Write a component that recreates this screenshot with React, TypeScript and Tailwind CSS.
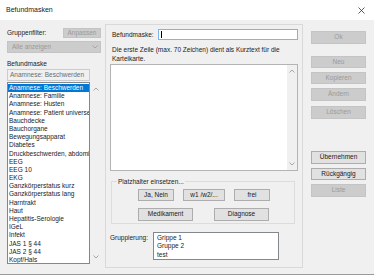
import React from 'react'

const items = [
  'Anamnese: Beschwerden',
  'Anamnese: Familie',
  'Anamnese: Husten',
  'Anamnese: Patient universell',
  'Bauchdecke',
  'Bauchorgane',
  'Bewegungsapparat',
  'Diabetes',
  'Druckbeschwerden, abdominal',
  'EEG',
  'EEG 10',
  'EKG',
  'Ganzkörperstatus kurz',
  'Ganzkörperstatus lang',
  'Harntrakt',
  'Haut',
  'Hepatitis-Serologie',
  'IGeL',
  'Infekt',
  'JAS 1 § 44',
  'JAS 2 § 44',
  'Kopf/Hals',
]

const Arrow = ({ down = false }: { down?: boolean }) => (
  <svg width="6" height="4" viewBox="0 0 6 4" className="block">
    <polyline
      points={down ? '0.5,0.5 3,3 5.5,0.5' : '0.5,3.5 3,1 5.5,3.5'}
      fill="none"
      stroke="#a6a6a6"
      strokeWidth="1"
    />
  </svg>
)

const Btn = ({
  label,
  w,
  h = 'h-[12px]',
  disabled = false,
}: {
  label: string
  w: string
  h?: string
  disabled?: boolean
}) => (
  <div
    className={`${w} ${h} flex items-center justify-center border text-[6.5px] leading-none ${
      disabled
        ? 'border-[#c4c4c4] bg-[#cccccc] text-[#9a9a9a]'
        : 'border-[#adadad] bg-[#e1e1e1] text-[#1a1a1a]'
    }`}
  >
    {label}
  </div>
)

const App = () => {
  return (
    <div
      className="flex h-[275px] w-[374px] flex-col overflow-hidden bg-[#f0f0f0] text-[6.5px] text-[#1a1a1a]"
      style={{ fontFamily: '"Liberation Sans", Arial, sans-serif' }}
    >
      {/* title bar */}
      <div className="flex h-[20px] shrink-0 items-center justify-between bg-white pl-[6px] pr-[9px]">
        <span className="text-[7px]">Befundmasken</span>
        <svg width="7" height="7" viewBox="0 0 7 7">
          <path d="M0.5 0.5 L6.5 6.5 M6.5 0.5 L0.5 6.5" stroke="#333" strokeWidth="0.8" />
        </svg>
      </div>

      <div className="flex flex-1 border-b border-[#9a9a9a]">
        {/* left column */}
        <div className="ml-[7px] flex w-[94px] flex-col pt-[8px]">
          <div className="flex h-[9px] items-center justify-between">
            <span>Gruppenfilter:</span>
            <div className="flex h-[10px] w-[38px] items-center justify-center border border-[#c4c4c4] bg-[#cccccc] text-[#9a9a9a]">
              Anpassen
            </div>
          </div>
          <div className="mt-[4px] flex h-[12px] items-center justify-between border border-[#c4c4c4] bg-[#cccccc] pl-[4px] pr-[2px] text-[#9a9a9a]">
            <span>Alle anzeigen</span>
            <Arrow down />
          </div>
          <div className="mt-[6px] h-[9px] leading-[9px]">Befundmaske</div>
          <div className="mt-[1px] flex h-[12px] w-[83px] items-center overflow-hidden whitespace-nowrap border border-[#cccccc] bg-[#f0f0f0] pl-[2px] text-[#6d6d6d]">
            Anamnese: Beschwerden
          </div>
          <div className="mt-[1px] flex h-[182px]">
            <div className="w-[83px] overflow-hidden border border-[#828790] bg-white pt-[1px]">
              {items.map((t, i) => (
                <div
                  key={t}
                  className={`h-[8.2px] whitespace-nowrap pl-[1px] leading-[8.2px] ${
                    i === 0 ? 'bg-[#0078d7] text-white' : ''
                  }`}
                >
                  {t}
                </div>
              ))}
            </div>
            <div className="flex flex-1 flex-col items-center justify-between py-[5px]">
              <Arrow />
              <Arrow down />
            </div>
          </div>
        </div>

        {/* center panel */}
        <div className="mb-[6px] ml-[4px] mt-[4px] flex w-[198px] flex-col border border-[#d9d9d9] px-[4px]">
          <div className="mt-[4px] flex h-[11px] items-center">
            <span className="ml-[2px] w-[46px]">Befundmaske:</span>
            <div className="flex h-[11px] flex-1 items-center border border-[#7eb4ea] bg-white pl-[2px]">
              <div className="h-[7px] w-px bg-black" />
            </div>
          </div>
          <div className="ml-[2px] mt-[5px] leading-[9px]">
            Die erste Zeile (max. 70 Zeichen) dient als Kurztext für die
            <br />
            Karteikarte.
          </div>
          <div className="mt-[1px] flex h-[107px] border border-[#b4b4b4] bg-white">
            <div className="flex-1" />
            <div className="flex w-[10px] flex-col items-center justify-between bg-[#f0f0f0] py-[4px]">
              <Arrow />
              <Arrow down />
            </div>
          </div>

          <div className="relative ml-[1px] mr-[3px] mt-[10px] flex h-[43px] flex-col border border-[#dcdcdc] pt-[7px]">
            <span className="absolute -top-[5px] left-[5px] bg-[#f0f0f0] px-[1px] leading-[9px]">
              Platzhalter einsetzen...
            </span>
            <div className="ml-[26px] flex gap-[9px]">
              <Btn label="Ja, Nein" w="w-[36px]" />
              <Btn label="w1 /w2/..." w="w-[42px]" />
              <Btn label="frei" w="w-[36px]" />
            </div>
            <div className="ml-[26px] mt-[7px] flex gap-[21px]">
              <Btn label="Medikament" w="w-[55px]" h="h-[13px]" />
              <Btn label="Diagnose" w="w-[55px]" h="h-[13px]" />
            </div>
          </div>

          <div className="mt-[8px] flex">
            <span className="w-[43px] pt-[1px] leading-[9px]">Gruppierung:</span>
            <div className="h-[28px] w-[126px] border border-[#828790] bg-white pl-[3px] pt-[1px] leading-[8.4px]">
              <div>Grippe 1</div>
              <div>Gruppe 2</div>
              <div>test</div>
            </div>
          </div>
        </div>

        {/* right column */}
        <div className="ml-[8px] flex w-[55px] flex-col pt-[11px]">
          <Btn label="Ok" w="w-full" h="h-[13px]" disabled />
          <div className="mt-[12px] flex flex-col gap-[4px]">
            <Btn label="Neu" w="w-full" disabled />
            <Btn label="Kopieren" w="w-full" disabled />
            <Btn label="Ändern" w="w-full" h="h-[13px]" disabled />
          </div>
          <div className="mt-[5px]">
            <Btn label="Löschen" w="w-full" h="h-[13px]" disabled />
          </div>
          <div className="mt-[32px] flex flex-col gap-[4px]">
            <Btn label="Übernehmen" w="w-full" h="h-[13px]" />
            <Btn label="Rückgängig" w="w-full" />
            <Btn label="Liste" w="w-full" h="h-[13px]" disabled />
          </div>
        </div>
      </div>
    </div>
  )
}

export default App
